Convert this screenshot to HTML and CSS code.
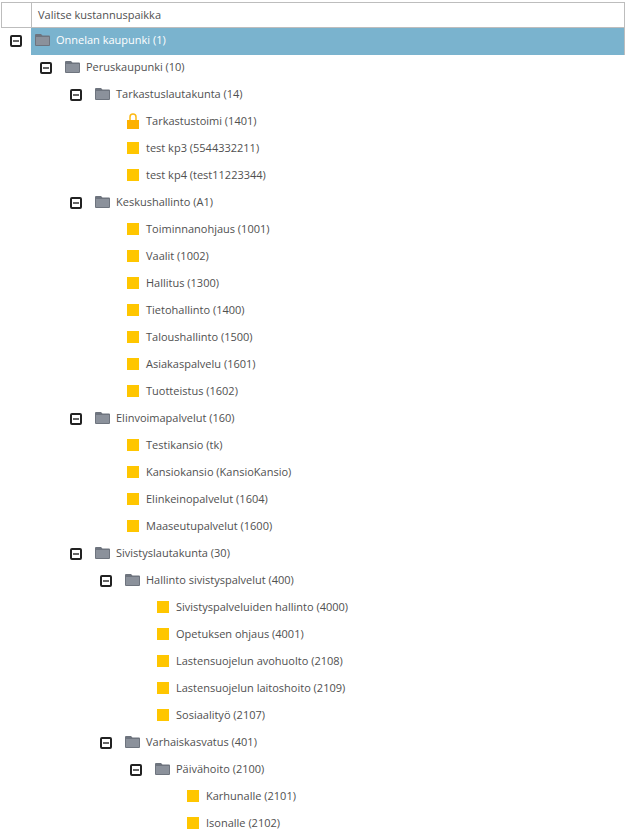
FILE: index.html
```html
<!DOCTYPE html>
<html lang="fi">
<head>
<meta charset="utf-8">
<title>Valitse kustannuspaikka</title>
<link rel="stylesheet" href="styles.css">
</head>
<body>
<svg class="defs" width="0" height="0" aria-hidden="true">
  <symbol id="folder" viewBox="0 0 15 12"><path d="M0 1Q0 0 1 0H6L7.5 1.5H14Q15 1.5 15 2.5V11Q15 12 14 12H1Q0 12 0 11Z" fill="#6e747e"/><rect x="1" y="3" width="13" height="8" fill="#8b919b"/></symbol>
  <symbol id="lock" viewBox="0 0 12 16"><path d="M3 8V4a3 3 0 0 1 6 0V8" fill="none" stroke="#fdb913" stroke-width="1.5"/><rect x="0" y="7" width="12" height="9" fill="#fdb100"/></symbol>
</svg>
<div class="table">
  <div class="head"><div class="corner"></div><div class="title">Valitse kustannuspaikka</div></div>
  <ul class="tree">
    <li class="row root"><span class="tog"></span><svg class="ico"><use href="#folder"/></svg><span class="lbl">Onnelan kaupunki (1)</span></li>
    <li class="row l1"><span class="tog"></span><svg class="ico"><use href="#folder"/></svg><span class="lbl">Peruskaupunki (10)</span></li>
    <li class="row l2"><span class="tog"></span><svg class="ico"><use href="#folder"/></svg><span class="lbl">Tarkastuslautakunta (14)</span></li>
    <li class="row l3"><svg class="lock"><use href="#lock"/></svg><span class="lbl">Tarkastustoimi (1401)</span></li>
    <li class="row l3"><span class="sq"></span><span class="lbl">test kp3 (5544332211)</span></li>
    <li class="row l3"><span class="sq"></span><span class="lbl">test kp4 (test11223344)</span></li>
    <li class="row l2"><span class="tog"></span><svg class="ico"><use href="#folder"/></svg><span class="lbl">Keskushallinto (A1)</span></li>
    <li class="row l3"><span class="sq"></span><span class="lbl">Toiminnanohjaus (1001)</span></li>
    <li class="row l3"><span class="sq"></span><span class="lbl">Vaalit (1002)</span></li>
    <li class="row l3"><span class="sq"></span><span class="lbl">Hallitus (1300)</span></li>
    <li class="row l3"><span class="sq"></span><span class="lbl">Tietohallinto (1400)</span></li>
    <li class="row l3"><span class="sq"></span><span class="lbl">Taloushallinto (1500)</span></li>
    <li class="row l3"><span class="sq"></span><span class="lbl">Asiakaspalvelu (1601)</span></li>
    <li class="row l3"><span class="sq"></span><span class="lbl">Tuotteistus (1602)</span></li>
    <li class="row l2"><span class="tog"></span><svg class="ico"><use href="#folder"/></svg><span class="lbl">Elinvoimapalvelut (160)</span></li>
    <li class="row l3"><span class="sq"></span><span class="lbl">Testikansio (tk)</span></li>
    <li class="row l3"><span class="sq"></span><span class="lbl">Kansiokansio (KansioKansio)</span></li>
    <li class="row l3"><span class="sq"></span><span class="lbl">Elinkeinopalvelut (1604)</span></li>
    <li class="row l3"><span class="sq"></span><span class="lbl">Maaseutupalvelut (1600)</span></li>
    <li class="row l2"><span class="tog"></span><svg class="ico"><use href="#folder"/></svg><span class="lbl">Sivistyslautakunta (30)</span></li>
    <li class="row l3 branch"><span class="tog"></span><svg class="ico"><use href="#folder"/></svg><span class="lbl">Hallinto sivistyspalvelut (400)</span></li>
    <li class="row l4"><span class="sq"></span><span class="lbl">Sivistyspalveluiden hallinto (4000)</span></li>
    <li class="row l4"><span class="sq"></span><span class="lbl">Opetuksen ohjaus (4001)</span></li>
    <li class="row l4"><span class="sq"></span><span class="lbl">Lastensuojelun avohuolto (2108)</span></li>
    <li class="row l4"><span class="sq"></span><span class="lbl">Lastensuojelun laitoshoito (2109)</span></li>
    <li class="row l4"><span class="sq"></span><span class="lbl">Sosiaalityö (2107)</span></li>
    <li class="row l3 branch"><span class="tog"></span><svg class="ico"><use href="#folder"/></svg><span class="lbl">Varhaiskasvatus (401)</span></li>
    <li class="row l4 branch"><span class="tog"></span><svg class="ico"><use href="#folder"/></svg><span class="lbl">Päivähoito (2100)</span></li>
    <li class="row l5"><span class="sq"></span><span class="lbl">Karhunalle (2101)</span></li>
    <li class="row l5"><span class="sq"></span><span class="lbl">Isonalle (2102)</span></li>
  </ul>
</div>
</body>
</html>
```
FILE: styles.css
```css
html, body { margin: 0; padding: 0; background: #fff; overflow: hidden; }
body { height: 831px; font-family: "Open Sans", sans-serif; font-size: 11px; color: #505050; }
.defs { position: absolute; }
.table { padding: 2px 0 0 1px; width: 625px; box-sizing: border-box; }
.head { display: flex; height: 26px; box-sizing: border-box; border: 1px solid #bdbdbd; }
.corner { width: 29px; border-right: 1px solid #bdbdbd; }
.title { padding-left: 6px; line-height: 23px; }
.tree { list-style: none; margin: 0; padding: 0; }
.row { display: flex; align-items: center; height: 27px; }
.root { background: #7ab3ce; color: #fff; margin-left: 30px; border-right: 1px solid #bdbdbd; position: relative; }
.root .tog { position: absolute; left: -21px; top: 7px; margin-top: 0; }
.root .ico { margin-left: 4px; }
.tog { width: 12px; height: 12px; margin-top: -1px; box-sizing: border-box; border: 2px solid #222; border-radius: 2px; display: flex; align-items: center; justify-content: center; flex: none; background: #fff; }
.tog::before { content: ""; width: 6px; height: 2px; background: #666; }
.ico { width: 15px; height: 12px; margin-left: 13px; margin-top: -3px; flex: none; }
.lbl { margin-left: 6px; margin-top: -4px; white-space: nowrap; }
.l1 { padding-left: 39px; }
.l2 { padding-left: 69px; }
.l3 { padding-left: 126px; }
.l3.branch { padding-left: 99px; }
.l4 { padding-left: 156px; }
.l4.branch { padding-left: 129px; }
.l5 { padding-left: 186px; }
.sq { width: 12px; height: 12px; background: #ffc600; flex: none; margin-right: 1px; margin-top: -3px; }
.lock { width: 12px; height: 16px; flex: none; margin-right: 1px; margin-top: -3px; }
```
